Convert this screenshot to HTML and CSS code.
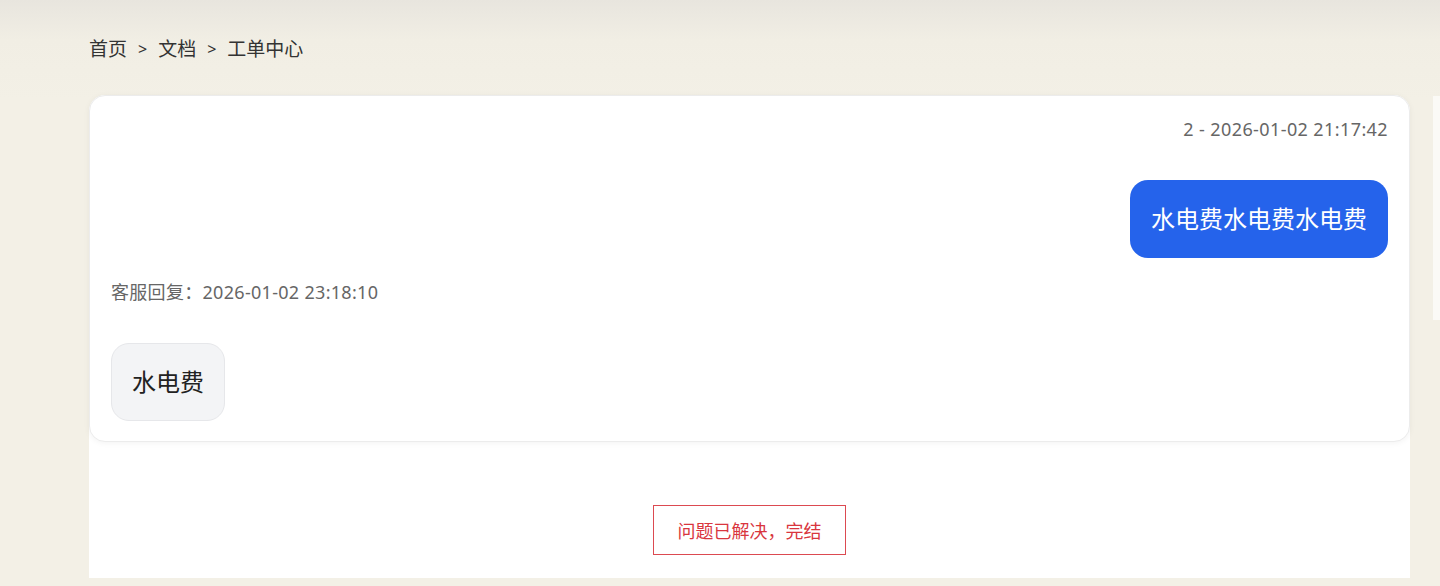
FILE: index.html
```html
<!DOCTYPE html>
<html lang="zh-CN">
<head>
    <meta charset="UTF-8">
    <meta name="viewport" content="width=device-width, initial-scale=1.0">
    <title>工单中心</title>
    <link rel="stylesheet" href="styles.css">
</head>
<body>
    <div class="page">
        <div class="content">
            <!-- Breadcrumb -->
            <div class="breadcrumb">
                <span>首页</span>
                <span class="sep">&gt;</span>
                <span>文档</span>
                <span class="sep">&gt;</span>
                <span>工单中心</span>
            </div>

            <div class="ticket">
                <!-- Conversation -->
                <div class="chat-card">
                    <div class="msg-meta right">2 - 2026-01-02 21:17:42</div>
                    <div class="msg-row right">
                        <div class="bubble user">水电费水电费水电费</div>
                    </div>

                    <div class="msg-meta">客服回复：2026-01-02 23:18:10</div>
                    <div class="msg-row">
                        <div class="bubble service">水电费</div>
                    </div>
                </div>

                <!-- Actions -->
                <div class="ticket-actions">
                    <button class="btn-close" type="button">问题已解决，完结</button>
                </div>
            </div>
        </div>

        <div class="side-panel"></div>
    </div>
</body>
</html>
```

FILE: styles.css
```css
body {
    margin: 0;
    padding: 0;
    font-family: "Noto Sans", "Noto Sans CJK SC", sans-serif;
    color: #333;
    background: linear-gradient(#e8e5de 0px, #f1eee4 40px, #f3f0e6 100px);
    background-color: #f3f0e6;
    height: 586px;
    overflow: hidden;
}

.page {
    display: flex;
    align-items: flex-start;
    gap: 23px;
    padding-left: 89px;
}

.content {
    width: 1321px;
    flex-shrink: 0;
}

/* Breadcrumb */
.breadcrumb {
    display: flex;
    align-items: center;
    margin-top: 37px;
    height: 24px;
    font-size: 19px;
    line-height: 24px;
    color: #333;
}

.breadcrumb .sep {
    font-size: 16px;
    margin: 0 11px;
}

/* Ticket */
.ticket {
    margin-top: 34px;
    background-color: #fff;
    border-radius: 16px 16px 0 0;
}

.chat-card {
    background-color: #fff;
    border-radius: 16px;
    border: 1px solid #ececec;
    box-shadow: 0 1px 6px rgba(0, 0, 0, 0.05);
    padding: 21px 21px 20px 21px;
}

.msg-meta {
    font-size: 18px;
    line-height: 24px;
    color: #666;
    letter-spacing: 0.3px;
}

.msg-meta.right {
    text-align: right;
    letter-spacing: 0.4px;
}

.msg-row {
    display: flex;
    margin-top: 39px;
    margin-bottom: 22px;
}

.msg-row:last-child {
    margin-bottom: 0;
}

.msg-row.right {
    justify-content: flex-end;
}

.bubble {
    font-size: 24px;
    line-height: 36px;
    padding: 21px 21px;
    border-radius: 18px;
}

.bubble.user {
    background-color: #2563eb;
    color: #fff;
}

.bubble.service {
    background-color: #f3f4f6;
    border: 1px solid #e6e7ea;
    color: #222;
    padding: 20px 20px;
}

/* Actions */
.ticket-actions {
    display: flex;
    justify-content: center;
    padding: 63px 0 23px 0;
}

.btn-close {
    font-family: "Noto Sans CJK SC", sans-serif;
    font-size: 18px;
    color: #d9363e;
    background-color: #fff;
    border: 1px solid #dc4a51;
    width: 193px;
    height: 50px;
    cursor: pointer;
}

.side-panel {
    margin-top: 96px;
    width: 200px;
    height: 224px;
    background-color: #fbfaf6;
}
```
